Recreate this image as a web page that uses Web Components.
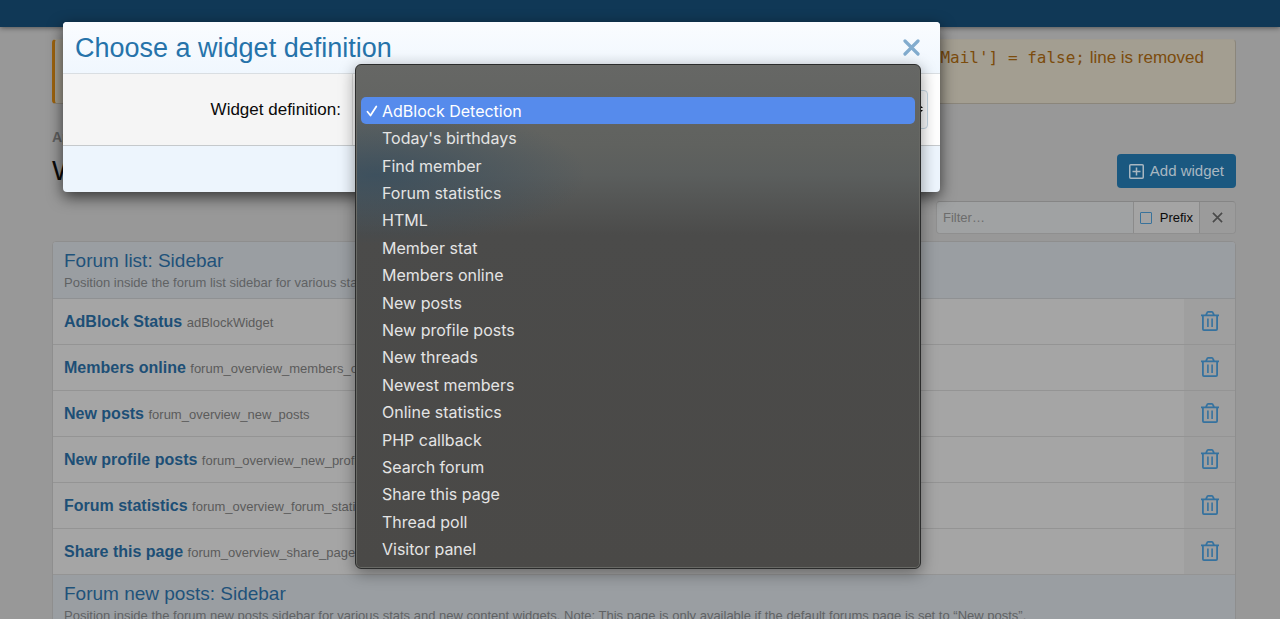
<!DOCTYPE html>
<html lang="en">
<head>
<meta charset="utf-8">
<meta name="viewport" content="width=device-width, initial-scale=1">
<title>Widgets</title>
<style>
  html { background: #989898; }
  body { margin: 0; font: 16px/20px "Liberation Sans", Arial, sans-serif; color: #0a0a0a; }
</style>
</head>
<body>
<admin-page>
  <site-notice slot="notice"></site-notice>
  <page-title slot="title"></page-title>
  <widget-filter slot="filter"></widget-filter>
  <widget-table slot="list"></widget-table>
</admin-page>
<modal-dialog heading="Choose a widget definition">
  <definition-field></definition-field>
</modal-dialog>

<script>
function define(name, markup, setup) {
  customElements.define(name, class extends HTMLElement {
    connectedCallback() {
      if (this.shadowRoot) return;
      const template = document.createElement('template');
      template.innerHTML = '<style>*{box-sizing:border-box}</style>' + markup;
      this.attachShadow({ mode: 'open' }).append(template.content.cloneNode(true));
      if (setup) setup.call(this, this.shadowRoot);
    }
  });
}

define('admin-page', `
<style>
  :host { display: block; }
  header { height: 27px; background: #103856; box-shadow: 0 1px 5px rgba(0,0,0,.45); }
  main { display: flex; flex-direction: column; padding: 12px 44px 40px 52px; }
</style>
<header></header>
<main>
  <slot name="notice"></slot>
  <slot name="title"></slot>
  <slot name="filter"></slot>
  <slot name="list"></slot>
</main>`);

define('site-notice', `
<style>
  :host { display: block; }
  div { min-height: 65px; padding: 8px 31px 8px 12px; border: 1px solid #8b867b; border-top-color: #a09b90;
    border-left: 3px solid #9c630d; border-radius: 4px; background: #a39e91; color: #7c4c0d; }
  p { margin: 0; font-size: 17px; line-height: 20px; text-align: right; }
  code { font: 16px/20px "DejaVu Sans Mono", monospace; }
</style>
<div role="note"><p><code>$config['enableMail'] = false;</code> line is removed</p></div>`);

define('page-title', `
<style>
  :host { display: block; margin-top: 25px; }
  nav { font-size: 14px; line-height: 16px; font-weight: bold; }
  nav a { color: #606060; text-decoration: none; }
  div { display: flex; justify-content: space-between; align-items: center; margin-top: 9px; }
  h1 { margin: 0; font-size: 28px; line-height: 34px; font-weight: normal; }
  button { display: flex; align-items: center; gap: 6px; height: 34px; padding: 0 12px; border: 0; border-radius: 4px;
    background: #1a5880; color: #a9b7c1; font: inherit; font-size: 15px; }
  svg { width: 15px; height: 15px; }
</style>
<nav><a href="#appearance">Appearance</a></nav>
<div>
  <h1>Widgets</h1>
  <button type="button"><svg viewBox="0 0 15 15" fill="none" stroke="currentColor" stroke-width="1.5"><rect x=".75" y=".75" width="13.5" height="13.5" rx="1"/><path d="M3.5 7.5h8M7.5 3.5v8"/></svg>Add widget</button>
</div>`);

define('widget-filter', `
<style>
  :host { display: block; margin-top: 13px; }
  form { display: flex; width: 300px; height: 33px; margin-left: auto; border: 1px solid #8f8f8f; border-top-color: #858585;
    border-radius: 4px; overflow: hidden; font-size: 13px; }
  input[type=text] { flex: 1; min-width: 0; padding: 0 6px; border: 0; background: #a0a2a3; font: inherit; color: #222; }
  input::placeholder { color: #6c6c6c; opacity: 1; }
  label { display: flex; align-items: center; gap: 8px; padding: 0 6px; border: solid #8b8b8b; border-width: 0 1px; background: #a4a4a4; }
  input[type=checkbox] { appearance: none; width: 12px; height: 12px; margin: 0; border: 1px solid #39729b; border-radius: 1px; }
  button { display: grid; place-items: center; width: 35px; padding: 0; border: 0; background: #9b9b9b; color: #4a4a4a; }
  svg { width: 11px; height: 11px; }
</style>
<form>
  <input type="text" placeholder="Filter…" aria-label="Filter">
  <label><input type="checkbox">Prefix</label>
  <button type="button" aria-label="Clear filter"><svg viewBox="0 0 12 12" fill="none" stroke="currentColor" stroke-width="1.8"><path d="m1 1 10 10M11 1 1 11"/></svg></button>
</form>`);

const SECTIONS = [
  { title: 'Forum list: Sidebar',
    note: 'Position inside the forum list sidebar for various stats and new content widgets.',
    rows: [['AdBlock Status', 'adBlockWidget'], ['Members online', 'forum_overview_members_online'],
      ['New posts', 'forum_overview_new_posts'], ['New profile posts', 'forum_overview_new_profile_posts'],
      ['Forum statistics', 'forum_overview_forum_statistics'], ['Share this page', 'forum_overview_share_page']] },
  { title: 'Forum new posts: Sidebar',
    note: 'Position inside the forum new posts sidebar for various stats and new content widgets. Note: This page is only available if the default forums page is set to “New posts”.',
    rows: [] }
];

define('widget-table', `
<style>
  :host { display: block; margin-top: 7px; border: 1px solid #8e8e8e; border-radius: 4px; overflow: hidden; background: #a5a5a5; }
  table { width: 100%; border-collapse: separate; border-spacing: 0; }
  th, td { padding: 0; text-align: left; font-weight: normal; }
  .section { padding: 7px 11px 5px; background: #9a9ea2; color: #1f527a; border-bottom: 1px solid #8f9193; }
  h2 { margin: 0; font-size: 19px; line-height: 24px; font-weight: normal; }
  p { margin: 0; font-size: 13px; line-height: 20px; color: #606264; white-space: nowrap; }
  .item { height: 46px; padding: 2px 0 0 11px; }
  .item, .del { border-bottom: 1px solid #949494; }
  .item a { color: #1d4f76; font-weight: bold; text-decoration: none; }
  .item span { font-size: 13px; color: #5b5b5b; }
  .del { width: 51px; background: #9f9f9f; vertical-align: top; }
  button { display: grid; place-items: center; width: 100%; height: 44px; padding: 0; border: 0; background: none; color: #35729f; }
  svg { display: block; width: 18px; height: 20px; }
</style>
<table></table>`, function (root) {
  root.querySelector('table').innerHTML = SECTIONS.map(s => `
    <tbody>
      <tr><th class="section" colspan="2" scope="rowgroup"><h2>${s.title}</h2><p>${s.note}</p></th></tr>
      ${s.rows.map(([name, key]) => `<tr>
        <td class="item"><a href="#${key}">${name}</a> <span>${key}</span></td>
        <td class="del"><button type="button" aria-label="Delete ${name}"><svg viewBox="0 0 18 20" fill="none" stroke="currentColor" stroke-width="1.8"><path d="M0 4.300h18M1.900 4.300V18q0 1.100 1.100 1.100h12q1.100 0 1.100-1.100V4.300M5 4l1-2.200q.3-.9 1.100-.9h3.800q.8 0 1.100.9L13 4"/><path stroke-width="1.600" d="M6.900 7.500v8.500M11.100 7.500v8.500"/></svg></button></td>
      </tr>`).join('')}
    </tbody>`).join('');
});

define('modal-dialog', `
<style>
  :host { display: block; position: absolute; top: 22px; left: 63px; right: 340px; }
  section { border-radius: 4px; background: #edf5fd; box-shadow: 0 5px 15px rgba(0,0,0,.65); }
  header { display: flex; align-items: center; justify-content: space-between; height: 52px; padding: 0 20px 0 12px;
    border-bottom: 1px solid #d9dee2; border-radius: 4px 4px 0 0; background: linear-gradient(#fafcff, #f0f7fe); }
  h2 { margin: 0; font-size: 27px; line-height: 32px; font-weight: normal; color: #2673aa; }
  button { display: grid; padding: 0; border: 0; background: none; color: #82acce; }
  svg { width: 17px; height: 17px; }
  footer { height: 47px; border-top: 1px solid #c5c9cc; }
</style>
<section role="dialog" aria-labelledby="heading">
  <header><h2 id="heading"></h2><button type="button" aria-label="Close"><svg viewBox="0 0 17 17" fill="none" stroke="currentColor" stroke-width="3.2" stroke-linecap="round"><path d="m2 2 13 13M15 2 2 15"/></svg></button></header>
  <slot></slot>
  <footer></footer>
</section>`, function (root) {
  root.querySelector('h2').textContent = this.getAttribute('heading');
});

define('definition-field', `
<style>
  :host { display: grid; grid-template-columns: 290px 1fr; height: 71px; background: #fefefe; }
  label { display: flex; align-items: center; justify-content: flex-end; padding-right: 11px; background: #f5f5f5;
    border-right: 1px solid #dcdcdc; font-size: 17px; }
  .control { position: relative; align-self: center; margin: 0 12px 0 10px; }
  select { display: block; width: 100%; height: 39px; padding: 0 8px; appearance: none; border: 1px solid #c3d5e2; border-radius: 4px; background: #f7f9fb; font: inherit; }
  svg { position: absolute; right: 5px; top: 14px; width: 8px; height: 10px; }
  option-menu { position: absolute; top: -26px; left: -8px; right: 7px; }
</style>
<label for="definition">Widget definition:</label>
<div class="control">
  <select id="definition"><option>AdBlock Detection</option></select>
  <svg viewBox="0 0 8 10"><path d="M0 4 4 0l4 4zM0 6h8l-4 4z"/></svg>
  <option-menu></option-menu>
</div>`);

const OPTIONS = ['AdBlock Detection', "Today's birthdays", 'Find member', 'Forum statistics', 'HTML', 'Member stat',
  'Members online', 'New posts', 'New profile posts', 'New threads', 'Newest members', 'Online statistics',
  'PHP callback', 'Search forum', 'Share this page', 'Thread poll', 'Visitor panel'];

define('option-menu', `
<style>
  :host { display: block; }
  ul { display: grid; grid-template-rows: repeat(17, 1fr); height: 505px; margin: 0; padding: 32px 5px 5px; list-style: none;
    border: 1px solid #2b2c2c; border-radius: 6px; color: #e4e4e4;
    font: 16px/20px Inter, Roboto, sans-serif;
    background: radial-gradient(ellipse 210px 70px at 20px 110px, rgba(52,76,94,.75), rgba(52,76,94,0)),
      linear-gradient(#666765, #60625f 80px, #5b5e5d 110px, #4b4b4a 170px, #4a4947);
    box-shadow: inset 0 0 0 1px #686965, 0 4px 16px rgba(0,0,0,.4); }
  li { display: flex; align-items: center; padding-left: 5px; border-radius: 5px; }
  li::before { content: ""; width: 16px; }
  li svg { display: none; width: 12px; height: 12px; }
  li[aria-selected=true] { background: #568bec; color: #fff; }
  li[aria-selected=true]::before { display: none; }
  li[aria-selected=true] svg { display: block; margin-right: 4px; }
</style>
<ul role="listbox" aria-label="Widget definition"></ul>`, function (root) {
  root.querySelector('ul').innerHTML = OPTIONS.map((text, i) =>
    `<li role="option" aria-selected="${i === 0}"><svg viewBox="0 0 12 12" fill="none" stroke="currentColor" stroke-width="1.8" stroke-linecap="round" stroke-linejoin="round"><path d="m1.500 6.800 3 3.700 5.800-9"/></svg>${text}</li>`).join('');
});
</script>
</body>
</html>
